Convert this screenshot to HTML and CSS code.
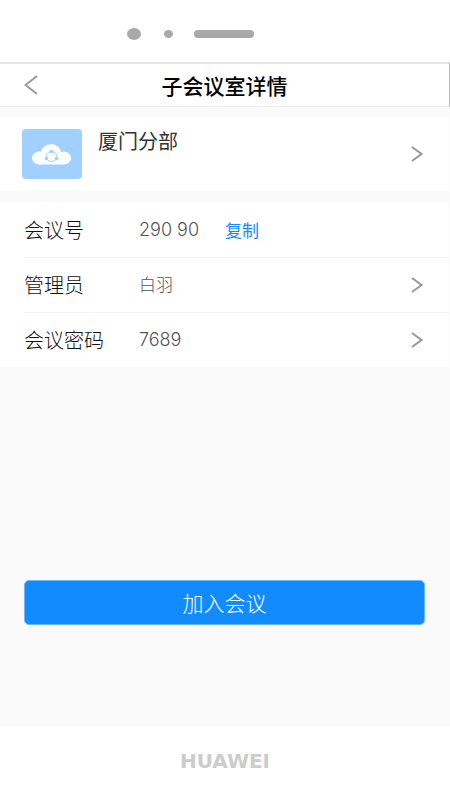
FILE: index.html
```html
<!DOCTYPE html>
<html lang="zh-CN">
<head>
<meta charset="utf-8">
<meta name="viewport" content="width=device-width, initial-scale=1">
<title>子会议室详情</title>
<link rel="stylesheet" href="styles.css">
</head>
<body>
<div class="device">
  <div class="device-top" aria-hidden="true">
    <span class="camera"></span>
    <span class="sensor"></span>
    <span class="speaker"></span>
  </div>

  <div class="screen">
    <header class="header">
      <button class="back" type="button" aria-label="返回">
        <svg width="14" height="20" viewBox="0 0 14 20"><path d="M13 1 1.500 10 13 19"/></svg>
      </button>
      <h1 class="title">子会议室详情</h1>
    </header>

    <main class="content">
      <a class="room" href="#room">
        <svg class="room-icon" width="60" height="50" viewBox="0 0 60 50">
          <rect width="60" height="50" rx="4" fill="#9fd0ff"/>
          <g fill="#fff">
            <ellipse cx="17" cy="29" rx="7" ry="6.500"/>
            <ellipse cx="29" cy="24" rx="10" ry="9"/>
            <ellipse cx="42" cy="29" rx="7" ry="6.500"/>
            <rect x="17" y="25" width="25" height="10.500"/>
          </g>
          <ellipse cx="29.500" cy="27.500" rx="5.500" ry="5" fill="none" stroke="#9fd0ff"/>
          <g fill="#9fd0ff">
            <circle cx="29.500" cy="22.500" r="1.800"/>
            <circle cx="24.500" cy="29.500" r="1.800"/>
            <circle cx="34.500" cy="29.500" r="1.800"/>
          </g>
        </svg>
        <span class="room-name">厦门分部</span>
        <svg class="chevron" width="12" height="16" viewBox="0 0 12 16"><path d="M1 1 10.500 8 1 15"/></svg>
      </a>

      <div class="list">
        <div class="row">
          <span class="label">会议号</span>
          <span class="value">290 90</span>
          <button class="copy" type="button">复制</button>
        </div>
        <a class="row" href="#admin">
          <span class="label">管理员</span>
          <span class="value name">白羽</span>
          <svg class="chevron" width="12" height="16" viewBox="0 0 12 16"><path d="M1 1 10.500 8 1 15"/></svg>
        </a>
        <a class="row" href="#password">
          <span class="label">会议密码</span>
          <span class="value">7689</span>
          <svg class="chevron" width="12" height="16" viewBox="0 0 12 16"><path d="M1 1 10.500 8 1 15"/></svg>
        </a>
      </div>

      <div class="actions">
        <button class="join" type="button">加入会议</button>
      </div>
    </main>
  </div>

  <footer class="brand">HUAWEI</footer>
</div>
</body>
</html>
```
FILE: styles.css
```css
* {
  box-sizing: border-box;
}

body {
  margin: 0;
  background: #fff;
  color: #333;
  font-family: "Noto Sans CJK SC", sans-serif;
}

button {
  margin: 0;
  padding: 0;
  border: 0;
  background: none;
  font-family: inherit;
  cursor: pointer;
}

a {
  color: inherit;
  text-decoration: none;
}

svg {
  display: block;
  flex: none;
}

.device {
  display: flex;
  flex-direction: column;
  min-height: 100vh;
}

.device-top {
  display: flex;
  align-items: center;
  justify-content: center;
  height: 62px;
  padding: 6px 70px 0 0;
}

.device-top span {
  background: #a9a9a9;
}

.camera {
  width: 14px;
  height: 12px;
  border-radius: 50%;
}

.sensor {
  width: 9px;
  height: 8px;
  margin: 0 21px 0 23px;
  border-radius: 50%;
}

.speaker {
  width: 60px;
  height: 8px;
  border-radius: 4px;
}

.screen {
  display: flex;
  flex: 1;
  flex-direction: column;
  background: #fafafa;
}

.header {
  display: grid;
  grid-template-columns: 14px 1fr 14px;
  align-items: center;
  height: 45px;
  padding: 0 24px;
  border-top: 2px solid #e6e6e6;
  border-right: 1px solid #b5b5b5;
  border-bottom: 1px solid #ededed;
  background: #fff;
}

.back path {
  fill: none;
  stroke: #999;
  stroke-width: 2;
}

.title {
  margin: 0;
  color: #000;
  font-size: 21px;
  font-weight: 500;
  line-height: 32px;
  text-align: center;
}

.content {
  display: flex;
  flex: 1;
  flex-direction: column;
  padding-right: 1px;
}

.room {
  display: flex;
  align-items: center;
  height: 74px;
  margin: 10px 0 11px;
  padding: 0 26px 0 22px;
  background: #fff;
}

.room-name {
  flex: 1;
  align-self: flex-start;
  margin: 8px 0 0 16px;
  font-size: 20px;
  line-height: 32px;
}

.chevron path {
  fill: none;
  stroke: #999;
  stroke-width: 2;
}

.list {
  background: #fff;
}

.row {
  display: flex;
  align-items: center;
  height: 55px;
  padding: 0 26px 0 0;
  margin-left: 24px;
}

.row + .row {
  border-top: 1px solid #f4f4f4;
}

.label {
  width: 115px;
  color: #111;
  font-size: 20px;
  font-weight: 300;
  line-height: 32px;
}

.value {
  color: #555;
  font-family: Inter, "Noto Sans CJK SC", sans-serif;
  font-size: 18px;
  font-weight: 300;
  line-height: 32px;
}

.name {
  font-size: 17px;
}

.row .chevron {
  margin-left: auto;
}

.copy {
  margin-left: 26px;
  color: #128bff;
  font-size: 17px;
  line-height: 32px;
}

.actions {
  display: flex;
  flex: 1;
  flex-direction: column;
  padding: 0 24px;
}

.actions::before {
  flex: 21;
  content: "";
}

.actions::after {
  flex: 10;
  content: "";
}

.join {
  height: 45px;
  border: 1px solid #6cb8ff;
  border-radius: 5px;
  background: #128bff;
  color: #fff;
  font-size: 21px;
  font-weight: 300;
}

.brand {
  height: 74px;
  padding-top: 22px;
  color: #ccc;
  font-family: "DejaVu Sans", sans-serif;
  font-size: 20px;
  font-weight: bold;
  line-height: 26px;
  text-align: center;
}
```
